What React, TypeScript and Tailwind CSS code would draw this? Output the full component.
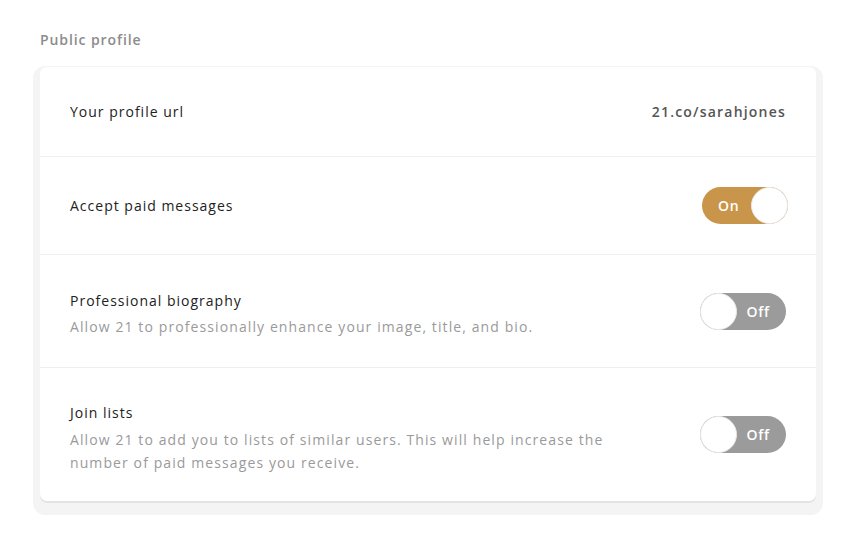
import { useState } from "react";

function Toggle({ on, onChange }: { on: boolean; onChange: () => void }) {
  return (
    <button
      onClick={onChange}
      className={`relative flex h-[37px] w-[86px] items-center rounded-full ${
        on ? "bg-[#c9954a]" : "bg-[#9b9b9b]"
      }`}
    >
      <span
        className={`absolute text-[14px] font-semibold tracking-[0.8px] text-white ${
          on ? "left-[16px]" : "right-[16px]"
        }`}
      >
        {on ? "On" : "Off"}
      </span>
      <span
        className={`absolute top-0 h-[37px] w-[37px] rounded-full border border-[#e8e8e8] bg-white ${
          on ? "right-0" : "left-0"
        }`}
      />
    </button>
  );
}

export default function App() {
  const [settings, setSettings] = useState({
    paid: true,
    bio: false,
    lists: false,
  });

  function flip(key: keyof typeof settings) {
    setSettings((prev) => ({ ...prev, [key]: !prev[key] }));
  }

  return (
    <div
      className="min-h-screen bg-white px-[33px] pt-[29px]"
      style={{ fontFamily: '"Open Sans", "Noto Sans", sans-serif' }}
    >
      <h2 className="mb-[16px] pl-[7px] text-[14px] font-semibold tracking-[0.9px] text-[#8c8c8c]">
        Public profile
      </h2>

      <div className="w-[790px] rounded-[12px] bg-[#f4f4f4] px-[7px] pt-[1px] pb-[14px]">
        <div className="overflow-hidden rounded-[7px] bg-white shadow-[0_2px_0_#e4e4e4]">
          <div className="flex h-[90px] items-center justify-between border-b border-[#efefef] px-[30px]">
            <span className="text-[14px] tracking-[1px] text-[#222]">Your profile url</span>
            <span className="text-[14px] font-semibold tracking-[1.2px] text-[#555]">
              21.co/sarahjones
            </span>
          </div>

          <div className="flex h-[98px] items-center justify-between border-b border-[#efefef] pr-[28px] pl-[30px]">
            <span className="text-[14px] tracking-[1px] text-[#222]">Accept paid messages</span>
            <Toggle on={settings.paid} onChange={() => flip("paid")} />
          </div>

          <div className="flex h-[113px] items-center justify-between border-b border-[#efefef] px-[30px]">
            <div className="flex flex-col gap-[5px] pt-[4px]">
              <span className="text-[14px] tracking-[1px] text-[#222]">Professional biography</span>
              <span className="text-[14px] tracking-[1.1px] text-[#9a9a9a]">
                Allow 21 to professionally enhance your image, title, and bio.
              </span>
            </div>
            <Toggle on={settings.bio} onChange={() => flip("bio")} />
          </div>

          <div className="flex h-[133px] items-center justify-between px-[30px]">
            <div className="flex w-[560px] flex-col gap-[5px] pt-[6px]">
              <span className="text-[14px] tracking-[1px] text-[#222]">Join lists</span>
              <span className="text-[14px] leading-[23px] tracking-[1.1px] text-[#9a9a9a]">
                Allow 21 to add you to lists of similar users. This will help increase the
                number of paid messages you receive.
              </span>
            </div>
            <Toggle on={settings.lists} onChange={() => flip("lists")} />
          </div>
        </div>
      </div>
    </div>
  );
}
